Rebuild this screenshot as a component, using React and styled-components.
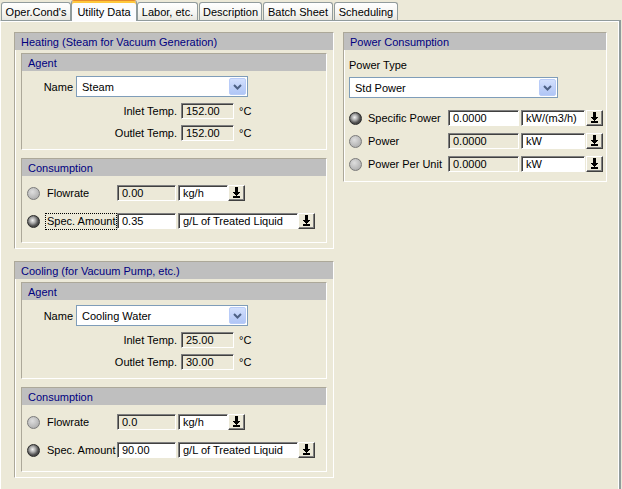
import React from "react";
import styled, { createGlobalStyle } from "styled-components";

const GlobalStyle = createGlobalStyle`
  html, body {
    margin: 0;
    padding: 0;
    background: #ECE9D8;
  }
  body {
    font-family: "Liberation Sans", Arial, sans-serif;
    font-size: 11px;
    color: #000;
  }
  * { box-sizing: border-box; }
`;

const tabs = [
  { name: "Oper.Cond's", w: 70 },
  { name: "Utility Data", w: 66, active: true },
  { name: "Labor, etc.", w: 61 },
  { name: "Description", w: 63 },
  { name: "Batch Sheet", w: 70 },
  { name: "Scheduling", w: 64 },
];

const utilities = [
  {
    title: "Heating (Steam for Vacuum Generation)",
    agent: "Steam",
    inlet: "152.00",
    outlet: "152.00",
    flow: "0.00",
    amount: "0.35",
    focus: true,
  },
  {
    title: "Cooling (for Vacuum Pump, etc.)",
    agent: "Cooling Water",
    inlet: "25.00",
    outlet: "30.00",
    flow: "0.0",
    amount: "90.00",
  },
];

const powerRows = [
  { label: "Specific Power", value: "0.0000", unit: "kW/(m3/h)", on: true },
  { label: "Power", value: "0.0000", unit: "kW", ro: true },
  { label: "Power Per Unit", value: "0.0000", unit: "kW", ro: true },
];

//===== componentes

const Chevron = () => (
  <svg width="9" height="6" viewBox="0 0 9 6">
    <path d="M1 1 L4.5 4.5 L8 1" fill="none" stroke="#4D6185" strokeWidth="2" />
  </svg>
);

const DownArrow = () => (
  <svg width="9" height="11" viewBox="0 0 9 11" shapeRendering="crispEdges">
    <rect x="3" y="0" width="3" height="5" fill="#000" />
    <path d="M0.5 5 H8.5 L4.5 9 Z" fill="#000" />
    <rect x="1" y="9" width="7" height="2" fill="#000" />
  </svg>
);

const ComboBox = ({ value, w }) => (
  <Combo $w={w}>
    <ComboText>{value}</ComboText>
    <ComboButton>
      <Chevron />
    </ComboButton>
  </Combo>
);

const UnitPicker = ({ unit, w }) => (
  <>
    <Field $w={w} $gap={2}>{unit}</Field>
    <ArrowButton>
      <DownArrow />
    </ArrowButton>
  </>
);

const UtilityGroup = ({ u }) => (
  <Group>
    <GroupHeader>{u.title}</GroupHeader>
    <Box $top={3}>
      <BoxHeader>Agent</BoxHeader>
      <AgentBody>
        <NameRow>
          <RowLabel $w={51}>Name</RowLabel>
          <ComboBox value={u.agent} w={172} />
        </NameRow>
        <TempRow>
          <RowLabel $w={155}>Inlet Temp.</RowLabel>
          <Field $w={53} $ro>{u.inlet}</Field>
          <Degree>°C</Degree>
        </TempRow>
        <TempRow>
          <RowLabel $w={155}>Outlet Temp.</RowLabel>
          <Field $w={53} $ro>{u.outlet}</Field>
          <Degree>°C</Degree>
        </TempRow>
      </AgentBody>
    </Box>
    <Box $top={8}>
      <BoxHeader>Consumption</BoxHeader>
      <ConsumptionBody>
        <OptionRow $indent={5}>
          <Radio />
          <OptionLabel $w={72}>Flowrate</OptionLabel>
          <Field $w={59} $ro>{u.flow}</Field>
          <UnitPicker unit="kg/h" w={50} />
        </OptionRow>
        <OptionRow $indent={5}>
          <Radio $on />
          <OptionLabel $w={72} $focus={u.focus}>Spec. Amount</OptionLabel>
          <Field $w={59}>{u.amount}</Field>
          <UnitPicker unit="g/L of Treated Liquid" w={120} />
        </OptionRow>
      </ConsumptionBody>
    </Box>
  </Group>
);

export default function App() {
  return (
    <Window>
      <GlobalStyle />
      <TabStrip>
        {tabs.map((t) => (
          <Tab key={t.name} $w={t.w} $active={t.active}>
            {t.name}
          </Tab>
        ))}
      </TabStrip>
      <Panel>
        <Column>
          {utilities.map((u) => (
            <UtilityGroup key={u.title} u={u} />
          ))}
        </Column>
        <Group>
          <GroupHeader>Power Consumption</GroupHeader>
          <PowerBody>
            <PowerTypeLabel>Power Type</PowerTypeLabel>
            <ComboBox value="Std Power" w={209} />
            <PowerRows>
              {powerRows.map((r) => (
                <OptionRow key={r.label} $indent={0}>
                  <Radio $on={r.on} />
                  <OptionLabel $w={82} $gap={4}>{r.label}</OptionLabel>
                  <Field $w={71} $ro={r.ro}>{r.value}</Field>
                  <Field $w={64} $gap={2}>{r.unit}</Field>
                  <ArrowButton $gap={1}>
                    <DownArrow />
                  </ArrowButton>
                </OptionRow>
              ))}
            </PowerRows>
          </PowerBody>
        </Group>
      </Panel>
    </Window>
  );
}

//===== CSS

const Window = styled.div`
  width: 622px;
  height: 489px;
  overflow: hidden;
  background: #ECE9D8;
`;

const TabStrip = styled.div`
  display: flex;
  align-items: flex-end;
  gap: 1px;
  height: 20px;
  padding-left: 1px;
  position: relative;
  z-index: 1;
`;

const Tab = styled.div`
  width: ${(p) => p.$w}px;
  height: ${(p) => (p.$active ? 21 : 18)}px;
  margin: ${(p) => (p.$active ? "0 -1px -1px -1px" : "0")};
  border: 1px solid #919B9C;
  border-bottom: none;
  border-top-color: ${(p) => (p.$active ? "#E68B2C" : "#919B9C")};
  border-radius: 3px 3px 0 0;
  background: ${(p) =>
    p.$active ? "#FCFCFE" : "linear-gradient(#FFFFFF, #F6F6F3 55%, #E8E7E0)"};
  box-shadow: ${(p) => (p.$active ? "inset 0 2px 0 #FFC83C" : "none")};
  display: flex;
  align-items: center;
  justify-content: center;
  padding-top: ${(p) => (p.$active ? 1 : 0)}px;
  white-space: nowrap;
`;

const Panel = styled.div`
  width: 621px;
  height: 469px;
  border: 1px solid #919B9C;
  border-left-color: #FFFFFF;
  border-right-width: 2px;
  border-bottom: none;
  box-shadow: inset 0 1px 0 #fff, inset -1px 0 0 #fff;
  display: grid;
  grid-template-columns: 320px 264px;
  column-gap: 9px;
  align-items: start;
  padding: 11px 0 0 13px;
`;

const Column = styled.div`
  display: flex;
  flex-direction: column;
  gap: 12px;
`;

const Group = styled.section`
  border: 1px solid;
  border-color: #ACA899 #FFFFFF #FFFFFF #ACA899;
  box-shadow: inset 1px 1px 0 #fff;
  padding-bottom: 5px;
`;

const GroupHeader = styled.div`
  height: 17px;
  line-height: 18px;
  padding-left: 6px;
  background: #BFBFBF;
  color: #000080;
  white-space: nowrap;
`;

const Box = styled.div`
  margin: ${(p) => p.$top}px 6px 0 6px;
  border: 1px solid;
  border-color: #ACA899 #FFFFFF #FFFFFF #ACA899;
`;

const BoxHeader = styled(GroupHeader)``;

const AgentBody = styled.div`
  display: flex;
  flex-direction: column;
  gap: 6px;
  padding: 5px 0 8px;
`;

const NameRow = styled.div`
  display: flex;
  align-items: center;
  height: 21px;
`;

const TempRow = styled.div`
  display: flex;
  align-items: center;
  height: 16px;
`;

const RowLabel = styled.span`
  width: ${(p) => p.$w}px;
  margin-right: ${(p) => (p.$w > 100 ? 4 : 3)}px;
  text-align: right;
  white-space: nowrap;
`;

const Degree = styled.span`
  margin-left: 5px;
`;

const Combo = styled.div`
  width: ${(p) => p.$w}px;
  height: 21px;
  border: 1px solid #7F9DB9;
  background: #fff;
  display: flex;
  align-items: center;
  padding: 0 1px 0 5px;
`;

const ComboText = styled.span`
  flex: 1;
  white-space: nowrap;
`;

const ComboButton = styled.span`
  width: 17px;
  height: 17px;
  border: 1px solid #B9CCF8;
  border-radius: 2px;
  background: linear-gradient(#D3E0FD, #BDCFF8 60%, #B0C6F6);
  display: flex;
  align-items: center;
  justify-content: center;
`;

const Field = styled.div`
  width: ${(p) => p.$w}px;
  height: 16px;
  margin-left: ${(p) => p.$gap || 0}px;
  border: 1px solid;
  border-color: #808080 #FFFFFF #FFFFFF #808080;
  box-shadow: inset 1px 1px 0 #404040;
  background: ${(p) => (p.$ro ? "#ECE9D8" : "#FFFFFF")};
  padding-left: 4px;
  line-height: 15px;
  white-space: nowrap;
  overflow: hidden;
`;

const ArrowButton = styled.span`
  width: 17px;
  height: 16px;
  margin-left: ${(p) => p.$gap || 0}px;
  border: 1px solid;
  border-color: #FFFFFF #404040 #404040 #FFFFFF;
  box-shadow: inset -1px -1px 0 #808080;
  background: #ECE9D8;
  display: flex;
  align-items: center;
  justify-content: center;
  padding-bottom: 1px;
`;

const ConsumptionBody = styled.div`
  display: flex;
  flex-direction: column;
  gap: 12px;
  padding: 9px 0 13px;
`;

const OptionRow = styled.div`
  display: flex;
  align-items: center;
  height: 16px;
  padding-left: ${(p) => p.$indent}px;
`;

const Radio = styled.span`
  width: 13px;
  height: 13px;
  flex: none;
  border-radius: 50%;
  border: 1px solid ${(p) => (p.$on ? "#2A2A2A" : "#7A7A7A")};
  background: ${(p) =>
    p.$on
      ? "radial-gradient(circle at 42% 40%, #F4F4F4 0, #A8A8A8 32%, #505050 60%, #2E2E2E 100%)"
      : "radial-gradient(circle at 40% 35%, #DEDEDE 0, #C0C0C0 50%, #A2A2A2 100%)"};
`;

const OptionLabel = styled.span`
  width: ${(p) => p.$w}px;
  height: 17px;
  margin-left: ${(p) => p.$gap || 5}px;
  padding-left: 1px;
  line-height: 15px;
  border: 1px dotted ${(p) => (p.$focus ? "#000" : "transparent")};
  white-space: nowrap;
`;

const PowerBody = styled.div`
  display: flex;
  flex-direction: column;
  align-items: flex-start;
  padding: 9px 0 4px 5px;
`;

const PowerTypeLabel = styled.div`
  height: 13px;
  line-height: 13px;
  margin-bottom: 5px;
`;

const PowerRows = styled.div`
  display: flex;
  flex-direction: column;
  gap: 7px;
  margin-top: 12px;
`;
